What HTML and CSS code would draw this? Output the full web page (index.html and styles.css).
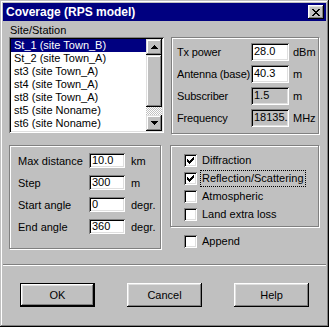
FILE: index.html
```html
<!DOCTYPE html>
<html lang="en">
<head>
    <meta charset="UTF-8">
    <title>Coverage (RPS model)</title>
    <link rel="stylesheet" href="styles.css">
</head>
<body>
    <div class="window">
        <div class="titlebar">
            <span class="title">Coverage (RPS model)</span>
            <span class="close">
                <svg width="8" height="7" viewBox="0 0 8 7"><path d="M0 0h2v1h1v1h2v-1h1v-1h2v1h-1v1h-1v1h-1v1h1v1h1v1h1v1h-2v-1h-1v-1h-2v1h-1v1h-2v-1h1v-1h1v-1h1v-1h-1v-1h-1v-1h-1z" fill="#000"/></svg>
            </span>
        </div>

        <div class="top">
            <div class="station">
                <div class="caption">Site/Station</div>
                <div class="listbox">
                    <ul class="items">
                        <li class="selected">St_1 (site Town_B)</li>
                        <li>St_2 (site Town_A)</li>
                        <li>st3 (site Town_A)</li>
                        <li>st4 (site Town_A)</li>
                        <li>st8 (site Town_A)</li>
                        <li>st5 (site Noname)</li>
                        <li>st6 (site Noname)</li>
                    </ul>
                    <div class="scrollbar">
                        <div class="sb-btn"><svg width="7" height="4" viewBox="0 0 7 4"><path d="M3 0h1v1h1v1h1v1h1v1h-7v-1h1v-1h1v-1h1z" fill="#000"/></svg></div>
                        <div class="sb-thumb"></div>
                        <div class="sb-track"></div>
                        <div class="sb-btn"><svg width="7" height="4" viewBox="0 0 7 4"><path d="M0 0h7v1h-1v1h-1v1h-1v1h-1v-1h-1v-1h-1v-1h-1z" fill="#000"/></svg></div>
                    </div>
                </div>
            </div>

            <div class="group params">
                <div class="row"><span class="lbl">Tx power</span><span class="field">28.0</span><span class="unit">dBm</span></div>
                <div class="row"><span class="lbl">Antenna (base)</span><span class="field">40.3</span><span class="unit">m</span></div>
                <div class="row"><span class="lbl">Subscriber</span><span class="field disabled">1.5</span><span class="unit">m</span></div>
                <div class="row"><span class="lbl">Frequency</span><span class="field disabled">18135.</span><span class="unit">MHz</span></div>
            </div>
        </div>

        <div class="middle">
            <div class="group range">
                <div class="row"><span class="lbl">Max distance</span><span class="field">10.0</span><span class="unit">km</span></div>
                <div class="row"><span class="lbl">Step</span><span class="field">300</span><span class="unit">m</span></div>
                <div class="row"><span class="lbl">Start angle</span><span class="field">0</span><span class="unit">degr.</span></div>
                <div class="row"><span class="lbl">End angle</span><span class="field">360</span><span class="unit">degr.</span></div>
            </div>

            <div class="options">
                <div class="group checks">
                    <div class="check"><span class="box"><svg width="7" height="7" viewBox="0 0 7 7"><path d="M0 2h1v1h1v1h1v-1h1v-1h1v-1h1v-1h1v3h-1v1h-1v1h-1v1h-1v1h-1v-1h-1v-1h-1z" fill="#000"/></svg></span><span>Diffraction</span></div>
                    <div class="check"><span class="box"><svg width="7" height="7" viewBox="0 0 7 7"><path d="M0 2h1v1h1v1h1v-1h1v-1h1v-1h1v-1h1v3h-1v1h-1v1h-1v1h-1v1h-1v-1h-1v-1h-1z" fill="#000"/></svg></span><span class="focus">Reflection/Scattering</span></div>
                    <div class="check"><span class="box"></span><span>Atmospheric</span></div>
                    <div class="check"><span class="box"></span><span>Land extra loss</span></div>
                </div>
                <div class="check append"><span class="box"></span><span>Append</span></div>
            </div>
        </div>

        <div class="separator"></div>

        <div class="buttons">
            <div class="btn default">OK</div>
            <div class="btn">Cancel</div>
            <div class="btn">Help</div>
        </div>
    </div>
</body>
</html>
```

FILE: styles.css
```css
body {
    margin: 0;
    background-color: #c0c0c0;
    font-family: "Liberation Sans", Arial, sans-serif;
    font-size: 11px;
    color: #000;
}

.window {
    width: 329px;
    height: 327px;
    box-sizing: border-box;
    padding: 3px;
    background-color: #c0c0c0;
    box-shadow: inset -1px -1px #000, inset 1px 1px #c0c0c0, inset -2px -2px #808080, inset 2px 2px #fff;
}

.titlebar {
    height: 18px;
    display: flex;
    align-items: center;
    justify-content: space-between;
    padding: 0 2px 0 3px;
    background-color: #000080;
    color: #fff;
}

.title {
    font-weight: bold;
    font-size: 12px;
}

.close {
    width: 16px;
    height: 14px;
    display: flex;
    align-items: center;
    justify-content: center;
    background-color: #c0c0c0;
    box-shadow: inset -1px -1px #000, inset 1px 1px #fff, inset -2px -2px #808080, inset 2px 2px #dfdfdf;
}

/* top row: station list + transmitter params */
.top {
    display: flex;
    gap: 7px;
    margin-top: 3px;
    padding-left: 6px;
}

.station {
    width: 155px;
}

.caption {
    height: 13px;
    line-height: 13px;
    padding-left: 1px;
}

.listbox {
    display: flex;
    height: 96px;
    box-sizing: border-box;
    padding: 2px;
    background-color: #fff;
    box-shadow: inset 1px 1px #808080, inset -1px -1px #fff, inset 2px 2px #000, inset -2px -2px #dfdfdf;
}

.items {
    flex: 1;
    margin: 0;
    padding: 0;
    list-style: none;
    overflow: hidden;
}

.items li {
    height: 13px;
    line-height: 13px;
    padding-left: 3px;
    white-space: nowrap;
}

.items li.selected {
    background-color: #000080;
    color: #fff;
}

.scrollbar {
    width: 16px;
    display: flex;
    flex-direction: column;
}

.sb-btn {
    height: 16px;
    display: flex;
    align-items: center;
    justify-content: center;
    background-color: #c0c0c0;
    box-shadow: inset -1px -1px #000, inset 1px 1px #dfdfdf, inset -2px -2px #808080, inset 2px 2px #fff;
}

.sb-thumb {
    height: 52px;
    background-color: #c0c0c0;
    box-shadow: inset -1px -1px #000, inset 1px 1px #dfdfdf, inset -2px -2px #808080, inset 2px 2px #fff;
}

.sb-track {
    flex: 1;
    background: repeating-conic-gradient(#c0c0c0 0 25%, #fff 0 50%) 0 0 / 2px 2px;
}

/* etched group frames */
.group {
    box-sizing: border-box;
    border: 1px solid #808080;
    box-shadow: inset 1px 1px #fff, 1px 1px #fff;
}

.row {
    display: flex;
    align-items: center;
}

.lbl {
    white-space: nowrap;
}

.field {
    box-sizing: border-box;
    padding: 2px 3px 0;
    background-color: #fff;
    box-shadow: inset 1px 1px #808080, inset -1px -1px #fff, inset 2px 2px #000, inset -2px -2px #dfdfdf;
    white-space: nowrap;
    overflow: hidden;
}

.field.disabled {
    background-color: #c0c0c0;
}

.params {
    width: 148px;
    height: 97px;
    margin-top: 13px;
    padding: 5px 0 0 5px;
    display: flex;
    flex-direction: column;
    gap: 4px;
}

.params .row {
    height: 18px;
}

.params .lbl {
    width: 74px;
    letter-spacing: -0.15px;
}

.params .field {
    width: 38px;
    height: 18px;
    line-height: 13px;
}

.params .unit {
    margin-left: 4px;
}

/* middle row: range + options */
.middle {
    display: flex;
    gap: 9px;
    margin-top: 11px;
    padding-left: 6px;
}

.range {
    width: 152px;
    height: 104px;
    padding: 7px 0 0 8px;
    display: flex;
    flex-direction: column;
    gap: 7px;
}

.range .row {
    height: 15px;
}

.range .lbl {
    width: 71px;
}

.range .field {
    width: 36px;
    height: 15px;
    line-height: 12px;
    padding-top: 1px;
}

.range .unit {
    margin-left: 6px;
}

.options {
    width: 149px;
}

.checks {
    height: 82px;
    padding: 8px 0 0 13px;
    display: flex;
    flex-direction: column;
    gap: 5px;
}

.check {
    display: flex;
    align-items: center;
    gap: 5px;
    height: 13px;
    line-height: 13px;
}

.box {
    width: 13px;
    height: 13px;
    box-sizing: border-box;
    padding: 3px;
    background-color: #fff;
    box-shadow: inset 1px 1px #808080, inset -1px -1px #fff, inset 2px 2px #000, inset -2px -2px #dfdfdf;
}

.box svg {
    display: block;
}

.focus {
    outline: 1px dotted #000;
    outline-offset: 1px;
}

.append {
    margin-top: 8px;
    padding-left: 14px;
}

.separator {
    margin-top: 15px;
    height: 0;
    border-top: 1px solid #808080;
    border-bottom: 1px solid #fff;
}

.buttons {
    display: flex;
    gap: 32px;
    margin-top: 17px;
    padding-left: 17px;
}

.btn {
    width: 75px;
    height: 24px;
    box-sizing: border-box;
    display: flex;
    align-items: center;
    justify-content: center;
    background-color: #c0c0c0;
    box-shadow: inset -1px -1px #000, inset 1px 1px #fff, inset -2px -2px #808080, inset 2px 2px #dfdfdf;
}

.btn.default {
    border: 1px solid #000;
}
```
